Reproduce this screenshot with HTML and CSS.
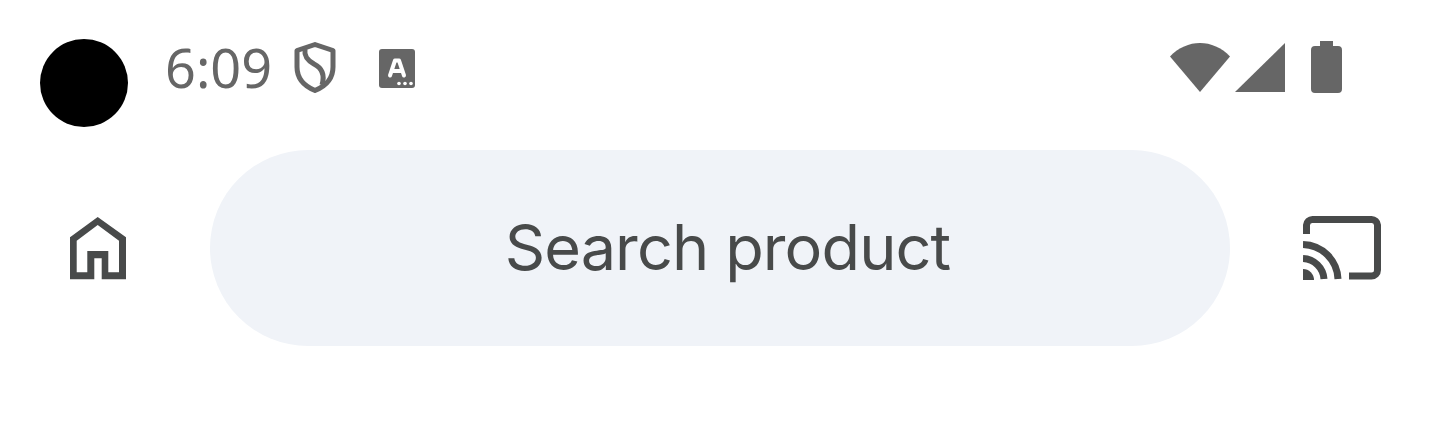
FILE: index.html
```html
<!DOCTYPE html>
<html lang="en">
<head>
  <meta charset="UTF-8">
  <title>Search product</title>
  <link rel="stylesheet" href="styles.css">
</head>
<body>
  <div class="status-bar">
    <div class="avatar"></div>
    <span class="clock">6:09</span>
    <svg class="icon-shield" width="42" height="51" viewBox="0 0 42 51">
      <path d="M21 2.500 L39 8.500 V25 C39 36 32 44 21 48.500 C10 44 3 36 3 25 V8.500 Z" fill="none" stroke="#666" stroke-width="5" stroke-linejoin="round"/>
      <path d="M11 7 C10 14 13 18 20 22 C28 26 31 33 28 43" fill="none" stroke="#666" stroke-width="5"/>
    </svg>
    <svg class="icon-badge" width="36" height="39" viewBox="0 0 36 39">
      <rect width="36" height="39" rx="3" fill="#666"/>
      <path d="M11 26.500 L16 11.500 H20 L25 26.500 M13 22 H23" fill="none" stroke="#fff" stroke-width="4" stroke-linecap="round" stroke-linejoin="round"/>
      <circle cx="20" cy="34.500" r="1.800" fill="#fff"/>
      <circle cx="26" cy="34.500" r="1.800" fill="#fff"/>
      <circle cx="32" cy="34.500" r="1.800" fill="#fff"/>
    </svg>
    <div class="status-right">
      <svg width="60" height="49" viewBox="0 0 60 49">
        <path d="M0 13.500 C17 -4.500 43 -4.500 60 13.500 L30 49 Z" fill="#666"/>
      </svg>
      <svg class="icon-signal" width="50" height="49" viewBox="0 0 50 49">
        <path d="M50 0 V49 H0 Z" fill="#666"/>
      </svg>
      <svg class="icon-battery" width="31" height="52" viewBox="0 0 31 52">
        <path d="M9 0 H22 V5 H27 A4 4 0 0 1 31 9 V48 A4 4 0 0 1 27 52 H4 A4 4 0 0 1 0 48 V9 A4 4 0 0 1 4 5 H9 Z" fill="#666"/>
      </svg>
    </div>
  </div>

  <div class="search-row">
    <svg class="icon-home" width="58" height="63" viewBox="0 0 58 63">
      <path fill-rule="evenodd" fill="#484a4a" d="M28.700 0 L57 20.300 V62.300 H32.700 V41.300 H25.300 V62.300 H1 V20.300 Z M28.700 8 L7.700 23.700 V55.300 H18.300 V34 H39.300 V55.300 H50 V23.700 Z"/>
    </svg>
    <div class="search-pill"><span class="search-label">Search product</span></div>
    <svg class="icon-cast" width="78" height="64" viewBox="0 0 78 64">
      <path d="M3.500 18 V9 A6 6 0 0 1 9.500 3.500 H68.500 A6 6 0 0 1 74.500 9 V54 A6 6 0 0 1 68.500 60 H46" fill="none" stroke="#484a4a" stroke-width="7"/>
      <path d="M0 28.500 A36 36 0 0 1 35 63 M0 42.500 A22 22 0 0 1 21 63" fill="none" stroke="#484a4a" stroke-width="7"/>
      <path d="M0 53 A11 11 0 0 1 11 64 H0 Z" fill="#484a4a"/>
    </svg>
  </div>
</body>
</html>
```

FILE: styles.css
```css
body {
  margin: 0;
  padding: 0;
  background: #fff;
  overflow: hidden;
  font-family: "Inter", "Roboto", sans-serif;
}

.status-bar {
  display: flex;
  align-items: center;
  height: 88px;
  padding: 39px 98px 0 40px;
}

.avatar {
  width: 88px;
  height: 88px;
  border-radius: 50%;
  background: #000;
}

.clock {
  margin-left: 37px;
  margin-top: -32px;
  font-family: "Noto Sans", sans-serif;
  font-size: 54px;
  line-height: 60px;
  color: #666;
}

.icon-shield {
  margin-left: 22px;
  margin-top: -32px;
}

.icon-badge {
  margin-left: 43px;
  margin-top: -30px;
}

.status-right {
  display: flex;
  align-items: flex-start;
  margin-left: auto;
  margin-top: -33px;
  height: 52px;
}

.status-right svg {
  margin-top: 2px;
}

.status-right .icon-signal {
  margin-left: 5px;
}

.status-right .icon-battery {
  margin-left: 26px;
  margin-top: 0;
}

.search-row {
  display: flex;
  align-items: center;
  height: 196px;
  margin-top: 23px;
  padding-left: 69px;
}

.search-pill {
  display: flex;
  align-items: center;
  justify-content: center;
  width: 1020px;
  height: 196px;
  margin-left: 83px;
  border-radius: 98px;
  background: #f0f3f8;
}

.search-label {
  margin-left: 15px;
  margin-bottom: 2px;
  font-size: 63px;
  letter-spacing: -0.9px;
  color: #484a4a;
}

.icon-home {
  margin-top: 1px;
}

.icon-cast {
  margin-left: 73px;
}
```
